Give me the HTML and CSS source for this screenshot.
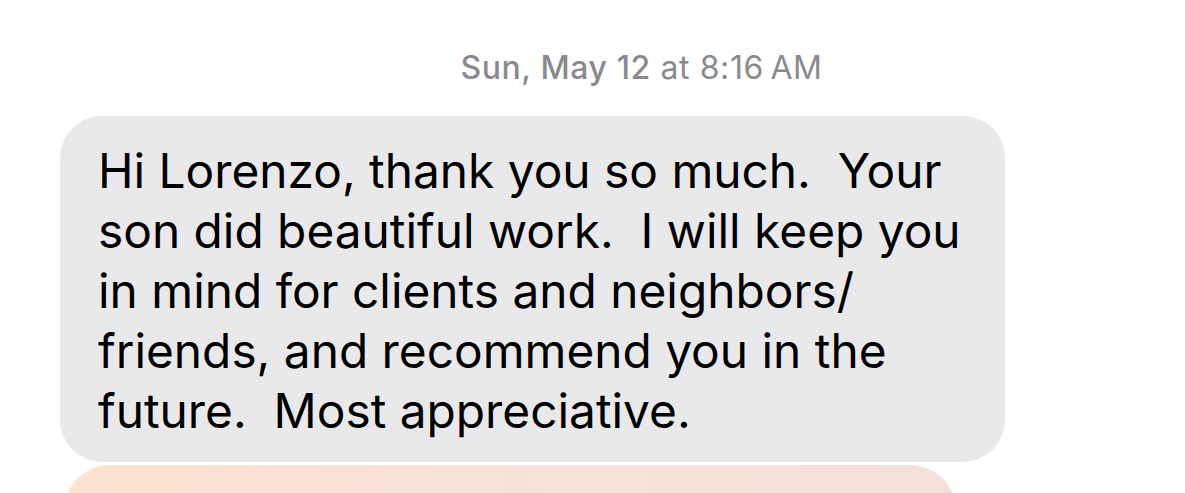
FILE: index.html
```html
<!DOCTYPE html>
<html>
<head>
<meta charset="utf-8">
<link rel="stylesheet" href="styles.css">
</head>
<body>
<div class="thread">
  <div class="stamp"><span class="day">Sun, May 12</span> at 8:16&#8239;AM</div>
  <div class="bubble">Hi Lorenzo, thank you so much.&nbsp; Your<br>son did beautiful work.&nbsp; I will keep you<br>in mind for clients and neighbors/<br>friends, and recommend you in the<br>future.&nbsp; Most appreciative.</div>
  <div class="bubble-next"></div>
</div>
</body>
</html>
```
FILE: styles.css
```css
html, body {
  margin: 0;
  padding: 0;
  background: #ffffff;
  overflow: hidden;
}
.thread {
  width: 1185px;
  height: 493px;
  overflow: hidden;
  display: flex;
  flex-direction: column;
  font-family: Inter, "Liberation Sans", Arial, sans-serif;
}
.stamp {
  margin-top: 48px;
  padding-left: 98px;
  text-align: center;
  font-size: 32px;
  letter-spacing: 0.6px;
  line-height: 40px;
  color: #8a8a8e;
}
.stamp .day {
  font-weight: 500;
}
.bubble {
  margin-top: 28px;
  margin-left: 60px;
  width: 945px;
  box-sizing: border-box;
  padding: 25px 20px 21px 38px;
  background: #e9e9eb;
  border-radius: 42px;
  font-size: 47.8px;
  line-height: 60px;
  color: #000;
  white-space: nowrap;
}
.bubble-next {
  margin-top: 3px;
  margin-left: 64px;
  width: 892px;
  height: 120px;
  flex-shrink: 0;
  border-radius: 46px;
  background: linear-gradient(90deg, #fce3d0 0%, #f8e2d8 50%, #f5dfd9 100%);
}
```
